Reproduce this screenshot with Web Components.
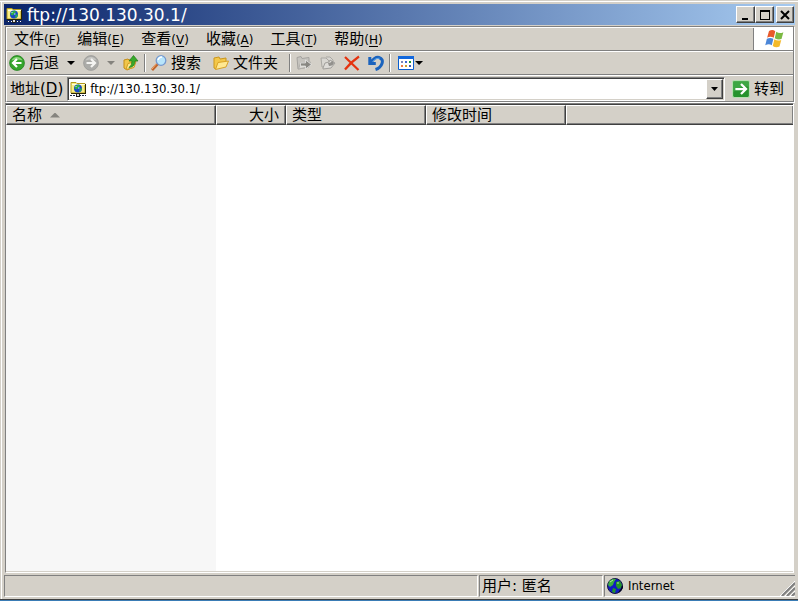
<!DOCTYPE html>
<html lang="zh-CN">
<head>
<meta charset="utf-8">
<title>ftp://130.130.30.1/</title>
<style>
:root{--face:#d4d0c8;--shade:#808080;--dark:#404040}
body{margin:0;height:100vh;background:#3a7cb5;font:15px/20px "DejaVu Sans","Noto Sans CJK SC",sans-serif;color:#000}
</style>
</head>
<body>
<ftp-window></ftp-window>
<script>
const base = `<style>
:host,*{box-sizing:border-box}
button{font:inherit;color:inherit;background:none;border:0;padding:0;margin:0;display:flex;align-items:center;white-space:nowrap}
</style>`;
function define(name, html, setup) {
  customElements.define(name, class extends HTMLElement {
    constructor() {
      super();
      const t = document.createElement('template');
      t.innerHTML = base + html;
      this.attachShadow({mode: 'open'}).append(t.content.cloneNode(true));
    }
    connectedCallback() { if (setup) setup(this, this.shadowRoot); }
  });
}

const netFolder = `<path d="M1 1.500h5l1 1h8V12H1z" fill="#f8ee86" stroke="#b39a1c"/><path d="M2 3.500h13" stroke="#fffde0"/><path d="M15.500 3v10M1 12.500h15" stroke="#2b2400" fill="none"/><circle cx="8" cy="7.500" r="4" fill="#1747c8"/><path d="M6 4.500l3-1 1 2-2 1-1 2-2.500-1zM9.500 8l2.500-1-1 3-2 1z" fill="#2fb244"/><path d="M5.500 6l1-1M8 7h1.500" stroke="#c8f3ff"/><path d="M0 14.500h16" stroke="#fff"/><path d="M0 14.500h16" stroke="#1d2a4a" stroke-dasharray="2 1"/><path d="M6 13h4v3H6z" fill="#222"/><path d="M7 13h2v2H7z" fill="#ddd"/>`;
const icons = {
  net: netFolder,
  back: `<circle cx="8" cy="8" r="7.400" fill="#35a52c" stroke="#23811f" stroke-width=".8"/><path d="M2.500 5.500a6 6 0 0 1 11 0q-5-2-11 0z" fill="#8cd67c"/><path d="M12.500 8H5M8 4L4 8l4 4" stroke="#fff" stroke-width="2.200" fill="none"/>`,
  forward: `<circle cx="8" cy="8" r="7.400" fill="#ababa8" stroke="#9b9b98" stroke-width=".8"/><path d="M2.500 5.500a6 6 0 0 1 11 0q-5-2-11 0z" fill="#c8c8c5"/><path d="M3.500 8H11M8 4l4 4-4 4" stroke="#f4f4f2" stroke-width="2.200" fill="none"/>`,
  up: `<path d="M1 5l4-1 1 1 5-1v8l-7 3-3-2z" fill="#f0c64c" stroke="#c48d16"/><path d="M3 14.500l2-6 8-2-2 6z" fill="#ffe98f" stroke="#d29b20"/><path d="M6 12.500q3-2 3-6.500H6l4.500-5.500L15 6h-3q0 6-6 6.500z" fill="#38aa2c" stroke="#1f7d1b" stroke-width=".7"/>`,
  search: `<path d="M1 15L7 8.500" stroke="#c0652c" stroke-width="2.800"/><path d="M1 14l5-6" stroke="#f2ae78"/><circle cx="10" cy="5.500" r="4.800" fill="#b8e5fb" stroke="#7599cf" stroke-width="1.300"/><path d="M7 5q1-3 4-3" stroke="#fff" stroke-width="1.500" fill="none"/>`,
  folder: `<path d="M1 3l5-1 1 2 6-1v4L3 14 1 13z" fill="#f4c84a" stroke="#cb961c"/><path d="M2.500 14.500L5 7.500l10.500-1.500L13 12z" fill="#ffe892" stroke="#d9a226"/>`,
  move: `<path d="M1 2.500l4-1 1 2 7-1V12l-11 2z" fill="#c6c4bf" stroke="#a5a39f"/><path d="M2.500 14l2-6 10-1-2 5z" fill="#d9d7d2" stroke="#b0aeaa"/><path d="M4.500 8h5V5l6 4.500-6 4.500v-3h-5z" fill="#888782" stroke="#eee" stroke-width=".7"/>`,
  copy: `<path d="M1 3h5l3 3v6H2zM6 2h4l3 3v3" fill="#d9d7d2" stroke="#aaa8a3"/><path d="M3 13l2-5 4-1 1-2 5 3-4 5-8 1z" fill="#dedcd8" stroke="#a19f9b"/><path d="M8 8q3 0 4-2l2 2q-1 3-5 3z" fill="#92908c"/>`,
  remove: `<path d="M1 2l13.500 13M15 1.500Q7 7 1 14.500" stroke="#e5330f" stroke-width="2.200" fill="none"/>`,
  undo: `<path d="M1.800 2v6.500h6M3 7.500Q7 1.500 11 2.500 15.500 4 14 8.500T7.500 14.500" stroke="#1b63bd" stroke-width="3" fill="none"/><path d="M4.500 6.500Q8 2.500 11.500 3.200" stroke="#5aa5ec" fill="none"/>`,
  views: `<path d="M.5 1.500h15v13H.5z" fill="#fff" stroke="#0a5fd0"/><path d="M0 1h16v3H0z" fill="#1267dc"/><path d="M3 6h2v2H3z" fill="#7a86b8"/><path d="M7 6h2v2H7z" fill="#3c66d0"/><path d="M11 6h2v2h-2z" fill="#199432"/><path d="M3 10h2v2H3z" fill="#ea7b48"/><path d="M7 10h2v2H7z" fill="#c8a32a"/><path d="M11 10h2v2h-2z" fill="#3f57ad"/>`,
  go: `<rect x=".5" y=".5" width="15" height="15" rx="1.500" fill="#26932d" stroke="#b5dfb0"/><path d="M1 1h14v5Q7 5 1 11z" fill="#4fb454" opacity=".6"/><path d="M3 8h9M8 3.500L12.500 8 8 12.500" stroke="#fff" stroke-width="2" fill="none"/>`,
  globe: `<circle cx="8" cy="8" r="7.500" fill="#1119c4" stroke="#15153c"/><path d="M2 3.500Q5 0 9 1L7 4 6 7 3 9 1 7z" fill="#3dad3f"/><path d="M9 4l4-1 2 4-1 3-3 1-2-3zM6 10l3 1-1 4-3-1z" fill="#249429"/><path d="M3 4l3-2M10 5l2 0" stroke="#b3eca4"/><path d="M12 14Q15 12 15.500 8" stroke="#050520" stroke-width="1.500" fill="none"/>`,
  flag: `<path d="M4 1.500Q7 0 9 1.800L7.800 7Q5 5.500 2.500 7z" fill="#e8592b"/><path d="M9.800 2.200Q12.500 4 15.500 2.500L14 8Q11.500 9 8.600 7.400z" fill="#7bb943"/><path d="M2.300 7.800Q5 6.400 7.500 7.800L6.200 13Q4 11.500 1 13z" fill="#4b86d8"/><path d="M8.300 8.200Q11 9.800 13.800 8.700L12.400 14Q9.500 15.300 7 13.500z" fill="#f4ba2b"/>`,
  min: `<path d="M4 11h6v2H4z"/>`,
  max: `<path fill-rule="evenodd" d="M3 3h10v10H3zM4 5v7h8V5z"/>`,
  close: `<path d="M4 4l8 8M12 4l-8 8" stroke="#000" stroke-width="2"/>`
};
define('ui-icon', `<style>:host{display:block;width:16px;height:16px;flex:none}:host([size=large]){width:20px;height:20px}svg{display:block;width:100%;height:100%}</style><svg viewBox="0 0 16 16" aria-hidden="true" fill="#000"></svg>`,
  (el, r) => { r.querySelector('svg').innerHTML = icons[el.getAttribute('name')] || ''; });

define('ui-arrow', `<style>:host{display:block;flex:none;width:8px;height:4px;background:currentColor;clip-path:polygon(0 0,100% 0,50% 100%)}:host([up]){width:10px;height:5px;clip-path:polygon(50% 0,100% 100%,0 100%)}:host([muted]){color:#85837e}:host([tiny]){width:7px}</style>`);

define('bevel-button', `<style>
:host{display:block;width:18px;height:17px;flex:none}
button{width:100%;height:100%;justify-content:center;background:var(--face);border:1px solid;border-color:#fff #404040 #404040 #fff;box-shadow:inset -1px -1px #808080;overflow:hidden}
</style><button type="button"><slot></slot></button>`,
  (el, r) => r.querySelector('button').setAttribute('aria-label', el.getAttribute('name')));

define('title-bar', `<style>
:host{display:flex;align-items:center;height:21px;margin:0 0 1px;padding:0 1px 0 2px;background:linear-gradient(90deg,#0a246a,#a6caf0);color:#fff;flex:none}
h1{flex:1;margin:0 0 0 5px;font:17px/20px "DejaVu Sans",sans-serif;white-space:nowrap}
.pair{display:flex;margin-right:2px}
.pair bevel-button{width:19px}
.ctl{color:#000}
</style><ui-icon name="net"></ui-icon><h1><slot></slot></h1>
<div class="pair ctl"><bevel-button name="最小化"><ui-icon name="min"></ui-icon></bevel-button><bevel-button name="最大化"><ui-icon name="max"></ui-icon></bevel-button></div>
<bevel-button class="ctl" name="关闭"><ui-icon name="close"></ui-icon></bevel-button>`);

define('menu-item', `<style>:host{display:block}small{font-size:12px;padding-top:2px}u{text-underline-offset:2px}button{height:20px}</style><button type="button"><slot></slot><small>(<u></u>)</small></button>`,
  (el, r) => { r.querySelector('u').textContent = el.getAttribute('key'); });

define('menu-bar', `<style>
:host{display:flex;justify-content:space-between}
nav{display:flex;gap:17px;padding:1px 0 0 7px}
.logo{width:40px;background:#fff;border-left:1px solid var(--shade);display:flex;align-items:center;justify-content:center}
</style><nav aria-label="菜单"><slot></slot></nav><div class="logo"><ui-icon name="flag" size="large"></ui-icon></div>`);

define('tool-button', `<style>:host{display:block}button{gap:4px;height:22px}</style><button type="button"><ui-icon></ui-icon><slot></slot></button>`,
  (el, r) => {
    const icon = document.createElement('ui-icon');
    icon.setAttribute('name', el.getAttribute('icon'));
    r.querySelector('ui-icon').replaceWith(icon);
    const button = r.querySelector('button');
    if (!el.textContent.trim()) button.setAttribute('aria-label', el.getAttribute('label'));
    button.disabled = el.hasAttribute('disabled');
  });

define('tool-bar', `<style>
:host{display:flex;align-items:center;padding-left:2px}
.group{display:flex;align-items:center;gap:8px}
.group+.group{border-left:1px solid var(--shade);box-shadow:inset 1px 0 #fff;height:18px;margin-left:5px;padding-left:6px}
.group.text{gap:12px;padding-right:6px}
.group.view{gap:1px;padding-left:8px}
</style>
<div class="group"><tool-button icon="back">后退</tool-button><ui-arrow></ui-arrow><tool-button icon="forward" label="前进" disabled></tool-button><ui-arrow muted></ui-arrow><tool-button icon="up" label="向上"></tool-button></div>
<div class="group text"><tool-button icon="search">搜索</tool-button><tool-button icon="folder">文件夹</tool-button></div>
<div class="group"><tool-button icon="move" label="移动到" disabled></tool-button><tool-button icon="copy" label="复制到" disabled></tool-button><tool-button icon="remove" label="删除"></tool-button><tool-button icon="undo" label="撤销"></tool-button></div>
<div class="group view"><tool-button icon="views" label="查看"></tool-button><ui-arrow></ui-arrow></div>`);

define('address-bar', `<style>
:host{display:flex;align-items:flex-end;padding:0 9px 0 3px}
.combo{flex:1;min-width:0;display:flex;align-items:center;height:24px;margin:0 7px 0 4px;padding:0 1px 0 2px;background:#fff;border:1px solid;border-color:#808080 #fff #fff #808080;box-shadow:inset 1px 1px #404040,inset -1px -1px var(--face)}
input{flex:1;min-width:0;border:0;outline:0;padding:0;margin-left:4px;background:none;font:13px/18px "DejaVu Sans Condensed",sans-serif;color:#000}
bevel-button{width:17px;height:20px}
.go{gap:4px;height:24px}
.go ui-icon{width:18px;height:18px}
label{white-space:nowrap;line-height:24px}
u{text-underline-offset:2px}
</style><label for="a">地址(<u>D</u>)</label>
<div class="combo"><ui-icon name="net"></ui-icon><input id="a" type="text" value="ftp://130.130.30.1/"><bevel-button name="展开"><ui-arrow tiny></ui-arrow></bevel-button></div>
<button class="go" type="button"><ui-icon name="go"></ui-icon>转到</button>`);

define('file-list', `<style>
:host{display:block;flex:1;min-height:0;margin:0 1px;background:#fff;border:1px solid;border-color:#808080 #fff #fff #808080;box-shadow:inset 0 1px var(--dark),inset 0 -1px var(--face);padding:1px 0}
table{width:100%;height:100%;border-collapse:separate;border-spacing:0;table-layout:fixed}
th{height:20px;padding:0 6px 0 5px;text-align:left;font-weight:400;line-height:17px;background:var(--face);border:1px solid;border-color:#fff #404040 #404040 #fff;box-shadow:inset -1px -1px #808080;white-space:nowrap}
th.num{text-align:right}
th.rest{border-right:0}
span{display:flex;align-items:center;gap:8px}
td{padding:0}
td:first-child{background:#f7f7f7}
</style><table><colgroup><col style="width:210px"><col style="width:70px"><col style="width:140px"><col style="width:140px"><col></colgroup>
<thead><tr><th><span>名称<ui-arrow up muted></ui-arrow></span></th><th class="num">大小</th><th>类型</th><th>修改时间</th><th class="rest"></th></tr></thead>
<tbody><tr><td></td><td></td><td></td><td></td><td></td></tr></tbody></table>`);

define('status-bar', `<style>
:host{display:grid;grid-template-columns:1fr 124px 191px;gap:1px;height:21px;margin-top:2px;flex:none}
div{border:1px solid;border-color:#808080 #fff #fff #808080;display:flex;align-items:center;padding-left:2px;white-space:nowrap;min-width:0}
.zone{font:13px/18px "DejaVu Sans Condensed",sans-serif;border-right:0;justify-content:space-between}
.zone span{display:flex;align-items:center;gap:5px}
svg{width:15px;height:15px;align-self:flex-end}
</style><div></div><div>用户: 匿名</div><div class="zone"><span><ui-icon name="globe"></ui-icon>Internet</span>
<svg viewBox="0 0 15 15" aria-hidden="true"><path d="M0 15L15 0M5 15L15 5M10 15l5-5" stroke="#fff"/><path d="M2 15L15 2M7 15l8-8M12 15l3-3" stroke="#808080" stroke-width="2"/></svg></div>`);

define('ftp-window', `<style>
:host{display:flex;flex-direction:column;height:calc(100vh - 1px);padding:4px 3px 3px 4px;background:var(--face);border-bottom:1px solid #404040;box-shadow:inset 0 1px var(--face),inset 0 2px #fff,inset 1px 0 var(--face),inset 2px 0 #fff}
.rebar{flex:none;margin:0 0 1px 1px;border:1px solid var(--shade);border-width:1px 1px 0;box-shadow:1px 1px #fff;margin-right:1px}
.rebar>*{border:1px solid;border-color:#fff transparent var(--shade) #fff;border-width:1px 0 1px 1px}
menu-bar,tool-bar{height:24px}
address-bar{height:27px}
</style>
<title-bar>ftp://130.130.30.1/</title-bar>
<div class="rebar">
<menu-bar><menu-item key="F">文件</menu-item><menu-item key="E">编辑</menu-item><menu-item key="V">查看</menu-item><menu-item key="A">收藏</menu-item><menu-item key="T">工具</menu-item><menu-item key="H">帮助</menu-item></menu-bar>
<tool-bar></tool-bar><address-bar></address-bar>
</div>
<file-list></file-list>
<status-bar></status-bar>`);
</script>
</body>
</html>
